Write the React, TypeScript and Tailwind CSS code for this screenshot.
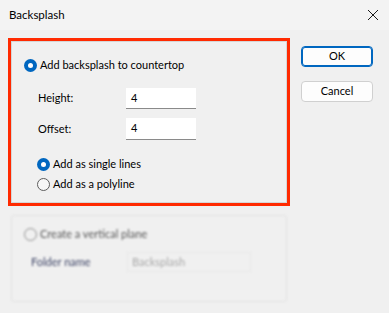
import React from "react";

function Radio({ checked }: { checked: boolean }) {
  return checked ? (
    <span className="w-[13px] h-[13px] rounded-full bg-[#0067c0] flex items-center justify-center shrink-0">
      <span className="w-[5px] h-[5px] rounded-full bg-white" />
    </span>
  ) : (
    <span className="w-[13px] h-[13px] rounded-full border border-[#5d5d5d] bg-[#f7f7f7] shrink-0" />
  );
}

export default function App() {
  return (
    <div
      className="w-[389px] h-[313px] bg-[#f0f0f0] text-[11px] text-black overflow-hidden"
      style={{ fontFamily: '"Segoe UI", Lato, "Noto Sans", sans-serif' }}
    >
      <div className="h-[30px] bg-[#f3f3f3] flex items-center justify-between pl-[9px] pr-[9px]">
        <span className="leading-none text-[11.5px]">Backsplash</span>
        <svg width="12" height="12" viewBox="0 0 12 12" className="mr-[1px]">
          <path d="M1 1L11 11M11 1L1 11" stroke="#1a1a1a" strokeWidth="1" />
        </svg>
      </div>

      <div className="flex pl-[8px] pt-[8px]">
        <div className="w-[282px] flex flex-col">
          <div className="border-[3px] border-[#ff2a00] h-[168px]">
            <div className="h-full border border-[#d6d6d6] flex flex-col">
              <div className="flex items-center gap-[3px] pl-[12px] pt-[15px] h-[32px]">
                <Radio checked />
                <span>Add backsplash to countertop</span>
              </div>
              <div className="flex items-center pl-[26px] mt-[14px]">
                <span className="w-[88px]">Height:</span>
                <div className="w-[70px] h-[21px] bg-white border-b border-[#8a8a8a] flex items-center pl-[5px]">4</div>
              </div>
              <div className="flex items-center pl-[26px] mt-[9px]">
                <span className="w-[88px]">Offset:</span>
                <div className="w-[70px] h-[22px] bg-white border-b border-[#8a8a8a] flex items-center pl-[5px]">4</div>
              </div>
              <div className="flex items-center gap-[3px] pl-[25px] mt-[16px] h-[16px]">
                <Radio checked />
                <span>Add as single lines</span>
              </div>
              <div className="flex items-center gap-[3px] pl-[25px] mt-[4px] h-[16px]">
                <Radio checked={false} />
                <span>Add as a polyline</span>
              </div>
            </div>
          </div>

          <div className="ml-[3px] mt-[9px] w-[276px] h-[87px] border border-[#e2e2e2] rounded-[3px] blur-[0.8px] text-[#444a5c]">
            <div className="flex items-center gap-[3px] pl-[12px] pt-[11px] h-[26px]">
              <span className="w-[13px] h-[13px] rounded-full border border-[#8c8c8c] shrink-0" />
              <span className="text-[#555]">Create a vertical plane</span>
            </div>
            <div className="flex items-center pl-[19px] mt-[10px]">
              <span className="w-[96px] text-[#3d4466]">Folder name</span>
              <div className="w-[124px] h-[20px] border border-[#e8e8e8] flex items-center pl-[4px] text-[#a8a8a8]">
                Backsplash
              </div>
            </div>
          </div>
        </div>

        <div className="ml-[11px] pt-[8px] flex flex-col gap-[14px]">
          <button className="w-[72px] h-[21px] bg-[#fdfdfd] border border-[#0067c0] rounded-[4px] flex items-center justify-center shadow-[inset_0_0_0_1px_#0067c0]">
            OK
          </button>
          <button className="w-[72px] h-[21px] bg-[#fdfdfd] border border-[#d0d0d0] rounded-[4px] flex items-center justify-center">
            Cancel
          </button>
        </div>
      </div>
    </div>
  );
}
